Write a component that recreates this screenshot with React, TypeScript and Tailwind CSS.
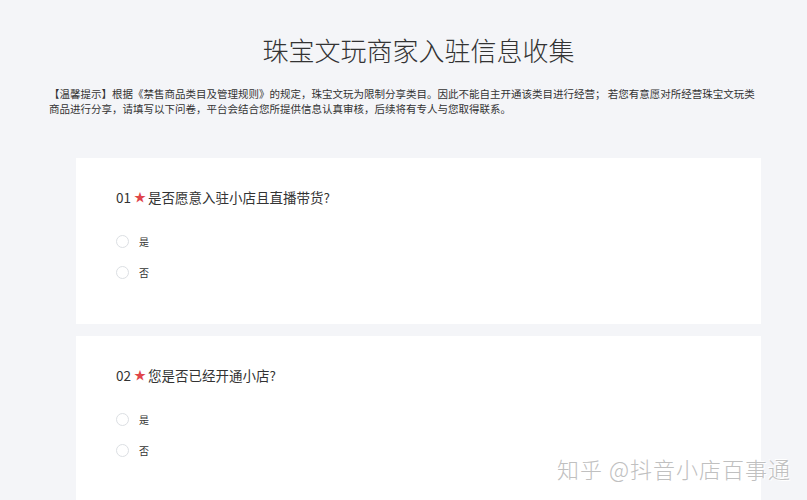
import React from 'react';

const font = { fontFamily: '"Noto Sans CJK SC", "Noto Sans", sans-serif' };

const questions = [
  { no: '01', title: '是否愿意入驻小店且直播带货?' },
  { no: '02', title: '您是否已经开通小店?' },
];

const Radio = ({ label }: { label: string }) => (
  <label className="flex items-center h-[31px]">
    <span className="w-[13px] h-[13px] rounded-full border border-[#dcdfe3] bg-white" />
    <span className="ml-[10px] text-[10px] text-[#333]">{label}</span>
  </label>
);

const QuestionCard = ({ no, title }: { no: string; title: string }) => (
  <section className="bg-white h-[166px] pl-[40px] pt-[28px]">
    <div className="flex items-center text-[13.5px] text-[#333] leading-[22px]">
      <span>{no}</span>
      <span className="text-[#e0454a] ml-[3px] mr-[2px] text-[12px]">★</span>
      <span>{title}</span>
    </div>
    <div className="mt-[18px]">
      <Radio label="是" />
      <Radio label="否" />
    </div>
  </section>
);

export default function App() {
  return (
    <div className="relative w-[807px] h-[500px] overflow-hidden bg-[#f4f5f8]" style={font}>
      <h1 className="pt-[33px] ml-[76px] w-[685px] text-center text-[26px] leading-[34px] font-light text-[#333]">
        珠宝文玩商家入驻信息收集
      </h1>
      <p className="mt-[19px] ml-[49px] w-[712px] text-[10.5px] leading-[15px] text-[#333]">
        【温馨提示】根据《禁售商品类目及管理规则》的规定，珠宝文玩为限制分享类目。因此不能自主开通该类目进行经营； 若您有意愿对所经营珠宝文玩类
        <br />
        商品进行分享，请填写以下问卷，平台会结合您所提供信息认真审核，后续将有专人与您取得联系。
      </p>
      <div className="mt-[42px] ml-[76px] w-[685px] flex flex-col gap-[12px]">
        {questions.map((q) => (
          <QuestionCard key={q.no} no={q.no} title={q.title} />
        ))}
      </div>
      <div className="absolute right-[16px] bottom-[18px] text-[22px] leading-[28px] font-light text-[#c0c0c0] tracking-[1px] [text-shadow:1px_1px_0_#fff,-1px_-1px_0_#fff]">
        知乎 @抖音小店百事通
      </div>
    </div>
  );
}
